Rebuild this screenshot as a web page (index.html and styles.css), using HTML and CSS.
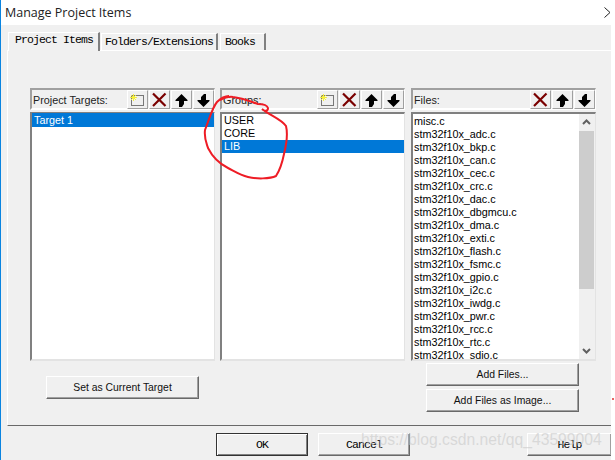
FILE: index.html
```html
<!DOCTYPE html>
<html lang="en">
<head>
<meta charset="utf-8">
<title>Manage Project Items</title>
<link rel="stylesheet" href="styles.css">
</head>
<body>
<div class="window">
  <div class="titlebar">
    <span class="title">Manage Project Items</span>
    <svg class="chevron" width="7" height="11" viewBox="0 0 7 11"><path d="M0.5 0.5 L6 5.5 L0.5 10.500" fill="none" stroke="#222" stroke-width="1"/></svg>
  </div>
  <div class="dialog">
    <div class="tabs">
      <div class="tab active">Project Items</div>
      <div class="tab folders">Folders/Extensions</div>
      <div class="tab books">Books</div>
    </div>
    <div class="pane">
      <div class="columns">
        <section class="col">
          <div class="head">
            <span class="head-label">Project Targets:</span>
            <div class="tools">
              <button class="tool"><svg width="19" height="17" viewBox="0 0 19 17"><use href="#i-new"/></svg></button>
              <button class="tool"><svg width="19" height="17" viewBox="0 0 19 17"><use href="#i-del"/></svg></button>
              <button class="tool"><svg width="19" height="17" viewBox="0 0 19 17"><use href="#i-up"/></svg></button>
              <button class="tool"><svg width="19" height="17" viewBox="0 0 19 17"><use href="#i-down"/></svg></button>
            </div>
          </div>
          <ul class="list targets">
            <li class="sel">Target 1</li>
          </ul>
        </section>
        <section class="col">
          <div class="head">
            <span class="head-label">Groups:</span>
            <div class="tools">
              <button class="tool"><svg width="19" height="17" viewBox="0 0 19 17"><use href="#i-new"/></svg></button>
              <button class="tool"><svg width="19" height="17" viewBox="0 0 19 17"><use href="#i-del"/></svg></button>
              <button class="tool"><svg width="19" height="17" viewBox="0 0 19 17"><use href="#i-up"/></svg></button>
              <button class="tool"><svg width="19" height="17" viewBox="0 0 19 17"><use href="#i-down"/></svg></button>
            </div>
          </div>
          <ul class="list groups">
            <li>USER</li>
            <li>CORE</li>
            <li class="sel">LIB</li>
          </ul>
        </section>
        <section class="col">
          <div class="head">
            <span class="head-label">Files:</span>
            <div class="tools">
              <button class="tool"><svg width="19" height="17" viewBox="0 0 19 17"><use href="#i-del"/></svg></button>
              <button class="tool"><svg width="19" height="17" viewBox="0 0 19 17"><use href="#i-up"/></svg></button>
              <button class="tool"><svg width="19" height="17" viewBox="0 0 19 17"><use href="#i-down"/></svg></button>
            </div>
          </div>
          <div class="list files">
            <ul class="file-items">
              <li>misc.c</li>
              <li>stm32f10x_adc.c</li>
              <li>stm32f10x_bkp.c</li>
              <li>stm32f10x_can.c</li>
              <li>stm32f10x_cec.c</li>
              <li>stm32f10x_crc.c</li>
              <li>stm32f10x_dac.c</li>
              <li>stm32f10x_dbgmcu.c</li>
              <li>stm32f10x_dma.c</li>
              <li>stm32f10x_exti.c</li>
              <li>stm32f10x_flash.c</li>
              <li>stm32f10x_fsmc.c</li>
              <li>stm32f10x_gpio.c</li>
              <li>stm32f10x_i2c.c</li>
              <li>stm32f10x_iwdg.c</li>
              <li>stm32f10x_pwr.c</li>
              <li>stm32f10x_rcc.c</li>
              <li>stm32f10x_rtc.c</li>
              <li>stm32f10x_sdio.c</li>
            </ul>
            <div class="scrollbar">
              <svg class="arrow" width="15" height="17" viewBox="0 0 15 17"><path d="M4 10 L7.500 6.500 L11 10" fill="none" stroke="#606060" stroke-width="2"/></svg>
              <div class="thumb"></div>
              <svg class="arrow arrow-end" width="15" height="17" viewBox="0 0 15 17"><path d="M4 7 L7.500 10.500 L11 7" fill="none" stroke="#606060" stroke-width="2"/></svg>
            </div>
          </div>
        </section>
      </div>
      <div class="actions">
        <div class="action-left"><button class="btn wide">Set as Current Target</button></div>
        <div class="action-right">
          <button class="btn wide">Add Files...</button>
          <button class="btn wide">Add Files as Image...</button>
        </div>
      </div>
    </div>
    <div class="footer">
      <button class="btn foot default">OK</button>
      <button class="btn foot">Cancel</button>
      <button class="btn foot help">Help</button>
    </div>
  </div>
</div>

<svg class="defs" width="0" height="0">
  <defs>
    <g id="i-new">
      <rect x="3.500" y="4.500" width="12" height="10" fill="none" stroke="#000" stroke-dasharray="1 1"/>
      <path d="M5.500 3 V10 M2 6.500 H9 M3 4 L8 9 M8 4 L3 9" stroke="#f6f03c" stroke-width="1"/>
    </g>
    <g id="i-del">
      <path d="M3 2.500 L15.500 15 M15.500 2.500 L3 15" stroke="#7a0000" stroke-width="2.200"/>
    </g>
    <g id="i-up">
      <path d="M9.500 3 L15.500 9 V10 H12 V13 L10 16 H7 V10 H3.500 V9 Z" fill="#000"/>
    </g>
    <g id="i-down">
      <path d="M9.500 16 L3.500 10 V9 H7 V6 L10 3 H12 V9 H15.500 V10 Z" fill="#000"/>
    </g>
  </defs>
</svg>

<svg class="scribble" width="615" height="460" viewBox="0 0 615 460">
  <path d="M220 100 C224 98 228 96 233 97 C242 98 252 102 258 104 C262 104 267 105 268 108 C268 111 265 112 262 109 C269 115 281 119 286 126 C288 134 286 146 284 154 C282 164 280 170 276 176 C270 179 256 179 248 177 C240 175 234 171 228 168 C220 164 213 158 208 148 C206 142 204 138 205 130 C209 120 212 108 217 102 C220 99 224 96 229 96" fill="none" stroke="#ee1c25" stroke-width="2"/>
  <circle cx="613" cy="399" r="1" fill="#e03030"/>
</svg>
<div class="watermark">https://blog.csdn.net/qq_43599004</div>
</body>
</html>
```

FILE: styles.css
```css
* { box-sizing: border-box; }
html, body { margin: 0; padding: 0; }
body {
  width: 615px;
  height: 460px;
  overflow: hidden;
  background: #fff;
  font-family: "Liberation Sans", Arial, sans-serif;
  font-size: 10.8px;
  color: #000;
  position: relative;
}
ul { list-style: none; margin: 0; padding: 0; }
button { font: inherit; color: inherit; margin: 0; padding: 0; }

.window {
  width: 611px;
  height: 460px;
  border-left: 1px solid #0a84e0;
  display: flex;
  flex-direction: column;
}
.titlebar {
  height: 25px;
  flex: none;
  background: #fff;
  display: flex;
  align-items: center;
  justify-content: space-between;
  padding: 0 0 1px 4px;
}
.title {
  font-family: "Open Sans", "Noto Sans", sans-serif;
  font-size: 12.5px;
  color: #222;
}
.dialog {
  flex: 1;
  background: #f0f0f0;
  padding: 7px 0 0 6px;
  display: flex;
  flex-direction: column;
}

.tabs {
  display: flex;
  align-items: flex-end;
  height: 18px;
  flex: none;
  padding-left: 1px;
  position: relative;
  z-index: 1;
}
.tab {
  height: 17px;
  margin-right: 1px;
  font-family: "Liberation Mono", monospace;
  font-size: 11.5px;
  letter-spacing: -0.9px;
  line-height: 16px;
  white-space: nowrap;
  background: #f0f0f0;
  border-top: 1px solid #fff;
  border-left: 1px solid #fff;
  border-right: 2px solid #808080;
}
.tab.active {
  width: 92px;
  height: 19px;
  margin-bottom: -1px;
  padding-left: 6px;
  line-height: 14px;
}
.tab.folders { width: 117px; padding-left: 3px; margin-right: 2px; }
.tab.books { width: 46px; padding-left: 4px; }

.pane {
  height: 376px;
  flex: none;
  border-top: 1px solid #fff;
  border-left: 1px solid #fff;
  border-bottom: 1px solid #696969;
  padding: 37px 0 0 22px;
  display: flex;
  flex-direction: column;
}
.columns {
  display: flex;
  gap: 5px;
  flex: none;
  height: 273px;
}
.col {
  width: 185px;
  display: flex;
  flex-direction: column;
  gap: 2px;
}
.col:last-child { margin-left: 1px; }
.head {
  height: 22px;
  flex: none;
  display: flex;
  align-items: center;
  justify-content: space-between;
  border-style: solid;
  border-width: 2px 1px 2px 2px;
  border-color: #a0a0a0 #fff #fff #a0a0a0;
  padding-left: 1px;
}
.head-label { color: #222; padding-top: 1px; }
.tools { display: flex; gap: 1px; }
.tool {
  width: 21px;
  height: 19px;
  background: #f0f0f0;
  border: 1px solid;
  border-color: #fff #a0a0a0 #a0a0a0 #fff;
  display: flex;
  align-items: center;
  justify-content: center;
}
.list {
  flex: 1;
  min-height: 0;
  background: #fff;
  border-style: solid;
  border-width: 2px 1px 2px 2px;
  border-color: #808080 #e3e3e3 #e3e3e3 #808080;
  overflow: hidden;
}
.list li {
  height: 13px;
  line-height: 13px;
  padding-left: 2px;
  white-space: nowrap;
}
.targets { border-top-width: 1px; }
.targets li { height: 14px; line-height: 14px; }
.list li.sel { background: #0078d7; color: #fff; }
.files { display: flex; }
.file-items { flex: 1; min-width: 0; padding-top: 1px; overflow: hidden; }
.file-items li { padding-left: 1px; }
.scrollbar {
  width: 16px;
  flex: none;
  background: #f0f0f0;
  display: flex;
  flex-direction: column;
}
.arrow { flex: none; }
.arrow-end { margin-top: auto; }
.thumb { height: 158px; width: 15px; background: #cdcdcd; }

.actions {
  display: flex;
  flex: none;
  padding-top: 2px;
}
.action-left {
  width: 396px;
  padding: 13px 0 0 16px;
}
.action-right {
  display: flex;
  flex-direction: column;
  gap: 3px;
}
.btn {
  background: #f0f0f0;
  border: 1px solid;
  border-color: #fff #696969 #696969 #fff;
  box-shadow: inset -1px -1px 0 #a0a0a0;
}
.wide { width: 153px; height: 23px; color: #111; font-size: 10.4px; display: block; }
.footer {
  display: flex;
  flex: 1;
  padding: 7px 0 4px 209px;
}
.foot {
  width: 92px;
  font-family: "Liberation Mono", monospace;
  font-size: 11.5px;
  letter-spacing: -0.9px;
  margin-right: 10px;
}
.foot.default { border: 1px solid #333; box-shadow: inset 1px 1px 0 #fff, inset -1px -1px 0 #808080; }
.foot.help { margin-left: 107px; margin-right: 0; width: 84px; border-right: 0; }
.defs { position: absolute; }
.scribble { position: absolute; left: 0; top: 0; pointer-events: none; }
.watermark {
  position: absolute;
  left: 361px;
  top: 431px;
  font-size: 15.7px;
  color: rgba(200,200,200,0.6);
  white-space: nowrap;
  pointer-events: none;
}
```
